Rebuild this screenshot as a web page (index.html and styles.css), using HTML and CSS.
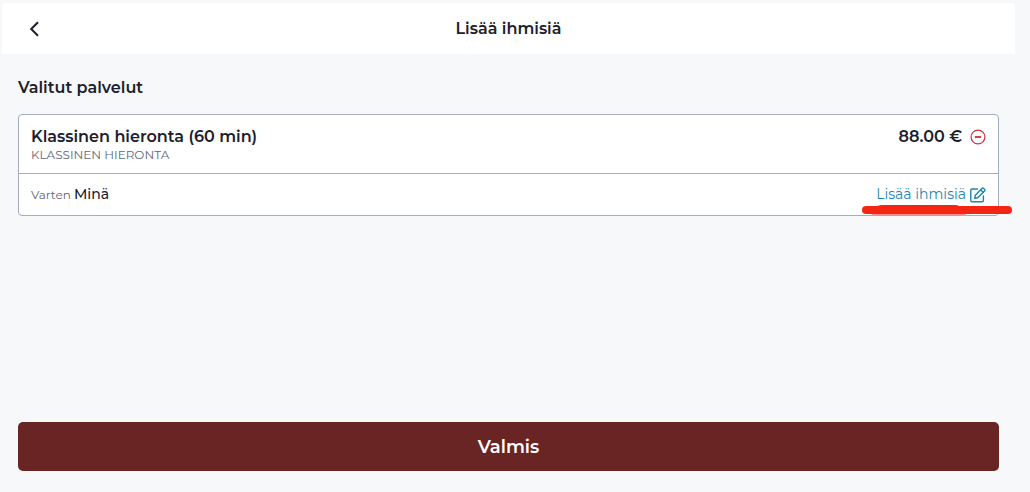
FILE: index.html
```html
<!DOCTYPE html>
<html lang="fi">

<head>
    <meta charset="UTF-8">
    <meta name="viewport" content="width=device-width, initial-scale=1">
    <title>Lisää ihmisiä</title>
    <link rel="stylesheet" href="styles.css">
</head>

<body>
    <header class="topbar">
        <button class="back" type="button" aria-label="Takaisin">
            <svg width="12" height="18" viewBox="0 0 12 18">
                <path d="M10 2.2 3.2 9l6.8 6.8" fill="none" stroke="currentColor" stroke-width="2" />
            </svg>
        </button>
        <h1>Lisää ihmisiä</h1>
    </header>

    <main>
        <h2>Valitut palvelut</h2>

        <article class="card">
            <div class="row service">
                <div>
                    <h3>Klassinen hieronta (60 min)</h3>
                    <p class="category">KLASSINEN HIERONTA</p>
                </div>
                <div class="price">
                    <span>88.00 €</span>
                    <button class="remove" type="button" aria-label="Poista">
                        <svg width="16" height="16" viewBox="0 0 16 16">
                            <circle cx="8" cy="8" r="6.9" fill="none" stroke="currentColor" stroke-width="1.2" />
                            <path d="M4.8 8h6.4" stroke="currentColor" stroke-width="1.8" />
                        </svg>
                    </button>
                </div>
            </div>
            <div class="row guests">
                <p class="for">Varten <span>Minä</span></p>
                <a class="add" href="#">Lisää ihmisiä
                    <svg width="16" height="16" viewBox="0 0 16 16" fill="none" stroke="currentColor" stroke-width="1.4" stroke-linejoin="round" stroke-linecap="round">
                        <path d="M7.5 2H2c-.8 0-1.2.4-1.2 1.2v10.4c0 .8.4 1.2 1.2 1.2h10.2c.8 0 1.2-.4 1.2-1.2V9" />
                        <path d="m5.3 8.2 6.6-6.7c.6-.6 1.2-.6 1.8 0l.8.8c.6.6.6 1.2 0 1.8l-6.7 6.6-3.1.6z" />
                        <path d="m10.6 2.8 2.6 2.6" />
                    </svg>
                </a>
                <svg class="marker" width="152" height="12" viewBox="0 0 152 12">
                    <path d="M5 6h142" fill="none" stroke="currentColor" stroke-width="8" stroke-linecap="round" />
                    <path d="M9 8.5 11 10.5h93l5-2 2-2-14-5L95 1H20l-4 1z" fill="currentColor" />
                </svg>
            </div>
        </article>

        <button class="done" type="button">Valmis</button>
    </main>
</body>

</html>
```

FILE: styles.css
```css
* {
    box-sizing: border-box;
}

body {
    margin: 0;
    padding: 3px 15px 0 2px;
    min-height: 100vh;
    display: flex;
    flex-direction: column;
    background-color: #f7f8fa;
    color: #1b202c;
    font-family: Montserrat, Inter, sans-serif;
    font-size: 16px;
    font-weight: 600;
    line-height: 24px;
}

h1,
h2,
h3,
p {
    margin: 0;
    font-size: inherit;
    font-weight: inherit;
}

button {
    padding: 0;
    border: 0;
    background: none;
    color: inherit;
    font: inherit;
    cursor: pointer;
}

svg {
    display: block;
}

.topbar {
    display: grid;
    grid-template-columns: 24px 1fr 24px;
    align-items: center;
    height: 51px;
    padding: 0 20px;
    border-radius: 4px 4px 0 0;
    background-color: #fff;
    text-align: center;
}

.back {
    display: flex;
    justify-content: center;
}

main {
    flex: 1;
    display: flex;
    flex-direction: column;
    padding: 22px 16px 21px;
}

.card {
    margin-top: 14px;
    border: 1px solid #a3adc2;
    border-radius: 4px;
    background-color: #fff;
}

.row {
    display: flex;
    justify-content: space-between;
    padding: 10px 12px;
}

.service {
    padding-bottom: 12px;
    border-bottom: 1px solid #a3adc2;
}

.category {
    color: #626878;
    font-size: 12px;
    font-weight: 400;
    line-height: 12px;
}

.price {
    display: flex;
    align-items: center;
    gap: 8px;
    height: 24px;
}

.remove {
    color: #c9303e;
}

.guests {
    position: relative;
    align-items: center;
    padding: 9px 12px;
    font-size: 14px;
    line-height: 23px;
}

.for {
    color: #626878;
    font-size: 12px;
    font-weight: 400;
}

.for span {
    color: #1b202c;
    font-size: 14px;
    font-weight: 500;
}

.add {
    display: flex;
    align-items: center;
    gap: 4px;
    color: #1a87ae;
    font-weight: 400;
    text-decoration: none;
}

/* pen stroke under the link, runs out past the card */
.marker {
    position: absolute;
    right: -15px;
    bottom: -1px;
    color: #f42613;
    pointer-events: none;
}

.done {
    height: 49px;
    margin-top: auto;
    border-radius: 5px;
    background-color: #692424;
    color: #fff;
    font-size: 18px;
}
```
